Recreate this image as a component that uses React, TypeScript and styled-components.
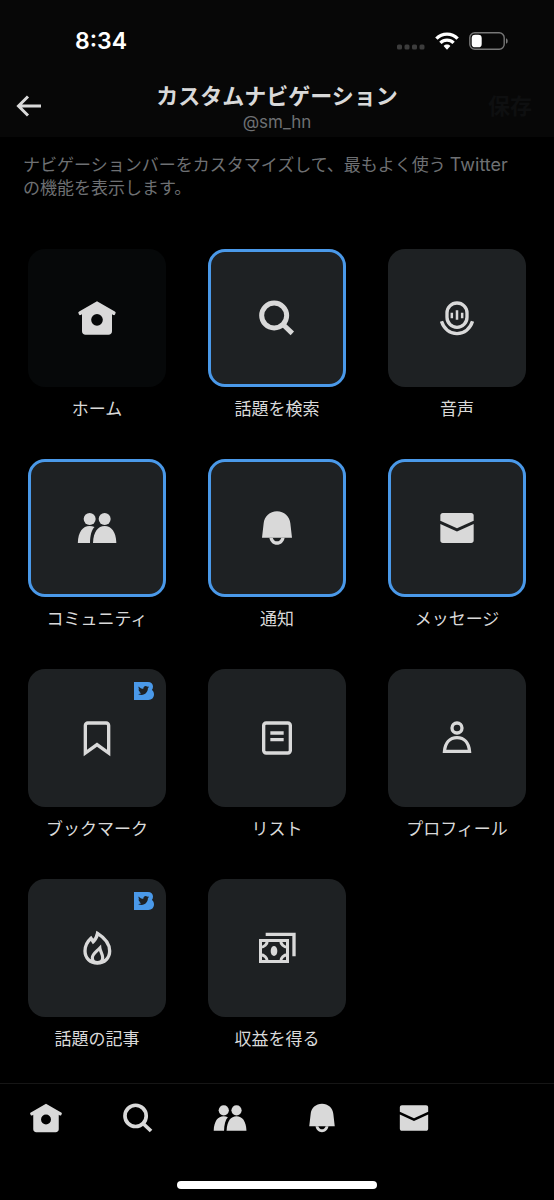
import React from "react";
import styled, { createGlobalStyle } from "styled-components";
import { FaTwitter } from "react-icons/fa6";

const GlobalStyle = createGlobalStyle`
  *, *::before, *::after { box-sizing: border-box; }
  body {
    margin: 0;
    background: #000;
    color: #d9d9d9;
    font-family: Inter, "Noto Sans CJK JP", sans-serif;
  }
  button { font: inherit; color: inherit; background: none; border: 0; padding: 0; cursor: pointer; }
  svg { display: block; }
`;

const Page = styled.div`
  min-height: 100vh;
  display: flex;
  flex-direction: column;
`;

const Header = styled.header`
  background: #070707;
`;

const StatusBar = styled.div`
  height: 82px;
  padding: 0 46px 0 75px;
  display: flex;
  align-items: center;
  justify-content: space-between;
  color: #fff;
`;

const Clock = styled.time`
  font-size: 23px;
  line-height: 28px;
  font-weight: 600;
`;

const StatusIcons = styled.div`
  display: flex;
  align-items: center;
  gap: 10px;
`;

const TitleBar = styled.div`
  display: grid;
  grid-template-columns: 1fr auto 1fr;
  align-items: start;
  padding: 0 16px 3px;
`;

const BackButton = styled.button`
  justify-self: start;
  height: 48px;
`;

const SaveButton = styled.button`
  justify-self: end;
  height: 48px;
  padding: 0 6px;
  font-size: 22px;
  line-height: 28px;
  font-weight: 700;

  &:disabled {
    color: #0e0f10;
    cursor: default;
  }
`;

const Heading = styled.div`
  text-align: center;
`;

const Title = styled.h1`
  margin: 0;
  font-size: 22px;
  line-height: 28px;
  font-weight: 700;
`;

const Handle = styled.p`
  margin: 0;
  font-size: 17px;
  line-height: 24px;
  color: #6e7073;
`;

const Main = styled.main`
  flex: 1;
`;

const Description = styled.p`
  margin: 0;
  padding: 16px 40px 49px 23px;
  font-size: 17px;
  line-height: 23px;
  color: #6e7073;
`;

const BrandName = styled.span`
  margin-left: 4px;
  font-size: 18px;
`;

const TileGrid = styled.div`
  display: grid;
  grid-template-columns: repeat(3, 1fr);
  gap: 38px 42px;
  padding: 0 28px 24px;
`;

const TileButton = styled.button`
  display: flex;
  flex-direction: column;
  gap: 10px;
  text-align: center;
`;

const TileFace = styled.span<{ $selected?: boolean; $locked?: boolean }>`
  position: relative;
  width: 100%;
  aspect-ratio: 1;
  display: flex;
  align-items: center;
  justify-content: center;
  border-radius: 17px;
  border: 3px solid ${(p) => (p.$selected ? "#4a99e9" : "transparent")};
  background: ${(p) => (p.$locked ? "#060809" : "#1e2123")} border-box;
`;

const TileLabel = styled.span`
  width: 100%;
  font-size: 17px;
  line-height: 24px;
`;

const BadgeSlot = styled.span`
  position: absolute;
  top: 10px;
  right: 9px;
`;

const TabBar = styled.nav`
  border-top: 1px solid #161616;
  padding: 17px 0 11px;
`;

const Tabs = styled.div`
  display: grid;
  grid-template-columns: repeat(6, 1fr);
  padding-right: 2px;
`;

const Tab = styled.button`
  display: flex;
  justify-content: center;
`;

const HomeIndicator = styled.div`
  width: 36%;
  height: 8px;
  margin: 46px auto 0;
  border-radius: 4px;
  background: #fff;
`;

type IconProps = { size: number };

const Glyph = ({ size, children }: IconProps & { children: React.ReactNode }) => (
  <svg width={size} height={size} viewBox="0 0 24 24" fill="currentColor" aria-hidden="true">
    {children}
  </svg>
);

const HomeIcon = ({ size }: IconProps) => (
  <Glyph size={size}>
    <path
      fillRule="evenodd"
      d="M12 1.9 22.7 8.1c.5.3.6.7.4 1.1l-.3.7c-.2.4-.6.5-1 .3l-.8-.5V20c0 1.200-.9 2.100-2.100 2.100H5.100C3.900 22.100 3 21.200 3 20V9.700l-.8.500c-.4.200-.8.100-1-.3l-.3-.7c-.2-.4-.1-.8.4-1.100zM12 9.600a3.500 3.500 0 1 0 0 7 3.500 3.500 0 0 0 0-7z"
    />
  </Glyph>
);

const SearchIcon = ({ size, weight = 2.6 }: IconProps & { weight?: number }) => (
  <Glyph size={size}>
    <g fill="none" stroke="currentColor" strokeWidth={weight}>
      <circle cx="10.300" cy="10.500" r="7.500" />
      <path d="M15.600 15.900 21.200 21.200" />
    </g>
  </Glyph>
);

const VoiceIcon = ({ size }: IconProps) => (
  <Glyph size={size}>
    <g fill="none" stroke="currentColor" strokeWidth="2">
      <rect x="6" y="3" width="12" height="14.600" rx="6" />
      <path d="M2.700 14C4 18.400 7.600 21.400 12 21.400s8-3 9.300-7.400" />
      <path strokeWidth="1.500" d="M8.900 8.800v3.400M12 7.400V13M15.100 8.800v3.400" />
    </g>
  </Glyph>
);

const CommunityIcon = ({ size }: IconProps) => (
  <Glyph size={size}>
    <circle cx="7.600" cy="6.600" r="3.600" />
    <circle cx="16.600" cy="6.600" r="3.600" />
    <path d="M9.600 21c.2-6.800 3-10.200 7-10.200s6.800 3.400 7 10.200z" />
    <path d="M.5 21c.2-6.800 3-10.200 7-10.200 1.100 0 2.100.2 3 .6C8.700 13.300 7.900 16.500 7.800 21z" />
  </Glyph>
);

const BellIcon = ({ size }: IconProps) => (
  <Glyph size={size}>
    <path d="M12 2C7.700 2 4.400 5 4 9.200L3 17.900h18L20 9.200C19.600 5 16.300 2 12 2z" />
    <path d="M7.400 17.800C7.900 20.400 9.700 22 12 22s4.100-1.600 4.600-4.200h-2c-.5 1.400-1.400 2.200-2.600 2.200s-2.100-.8-2.600-2.200z" />
  </Glyph>
);

const MailIcon = ({ size }: IconProps) => (
  <Glyph size={size}>
    <path d="M2 7.600V4.500C2 3.600 2.600 3 3.500 3h17c.9 0 1.500.6 1.500 1.500v3.100l-10 4.500z" />
    <path d="M2 9.600 12 14.100 22 9.600v9.900c0 .9-.6 1.500-1.500 1.500h-17c-.9 0-1.500-.6-1.500-1.500z" />
  </Glyph>
);

const BookmarkIcon = ({ size }: IconProps) => (
  <Glyph size={size}>
    <path d="M4 4.500C4 3.120 5.120 2 6.500 2h11C18.880 2 20 3.120 20 4.500v18.440l-8-5.710-8 5.710V4.500zM6.500 4c-.28 0-.5.220-.5.500v14.560l6-4.290 6 4.290V4.500c0-.28-.22-.5-.5-.5h-11z" />
  </Glyph>
);

const ListIcon = ({ size }: IconProps) => (
  <Glyph size={size}>
    <g fill="none" stroke="currentColor" strokeWidth="2">
      <rect x="4" y="3" width="16" height="18" rx="1.500" />
      <path d="M8 9h8M8 13h8" />
    </g>
  </Glyph>
);

const ProfileIcon = ({ size }: IconProps) => (
  <Glyph size={size}>
    <g fill="none" stroke="currentColor" strokeWidth="2">
      <circle cx="12" cy="6" r="3" />
      <path d="M4.500 20c.4-5 3.100-8.200 7.500-8.200s7.100 3.200 7.500 8.200z" />
    </g>
  </Glyph>
);

const FlameIcon = ({ size }: IconProps) => (
  <Glyph size={size}>
    <g fill="none" stroke="currentColor" strokeWidth="2">
      <path d="M12.300 3.200c4.500 2.800 7.300 6.500 7.300 10.600 0 4.300-3.200 7.200-7.400 7.200s-7.400-2.900-7.400-7.200c0-3 1.300-5.500 3.600-7.600l1.300 2c1.300-1.200 2.200-2.900 2.600-5z" />
      <path strokeWidth="1.900" d="M12.200 20.800c-1.900 0-3-1.200-3-2.900 0-2.400 2.200-3.500 4.500-5.900.2 2 1.700 3.400 1.700 5.900 0 1.700-1.300 2.900-3.200 2.900z" />
    </g>
  </Glyph>
);

const MoneyIcon = ({ size }: IconProps) => (
  <Glyph size={size}>
    <g fill="none" stroke="currentColor" strokeWidth="1.800">
      <path strokeWidth="2" d="M5.200 3.800h17V17" />
      <rect x="2.100" y="7.500" width="16.200" height="12.600" />
      <path d="M6.200 7.500c0 2.200-1.900 4-4.100 4M14.200 7.500c0 2.200 1.900 4 4.100 4M6.200 20.100c0-2.200-1.900-4-4.100-4M14.200 20.100c0-2.200 1.900-4 4.100-4" />
    </g>
    <ellipse cx="10.200" cy="13.800" rx="2" ry="3" />
  </Glyph>
);

const BlueBadge = () => (
  <svg width="20" height="18" viewBox="0 0 20 18" aria-hidden="true">
    <path
      fill="#4a99e9"
      d="M0 0h14c3 0 5 1.900 5 4.600 0 1.400-.4 2.600-1.100 3.500 1.300.9 2.100 2.400 2.100 4.200 0 3.400-2.300 5.700-5.600 5.700H0z"
    />
    <FaTwitter x="4" y="3" size={11} color="#1e2123" />
  </svg>
);

const BackArrow = () => (
  <svg width="26" height="22" viewBox="0 0 26 22" fill="none" stroke="currentColor" strokeWidth="3" aria-hidden="true">
    <path d="M12 1.500 2.500 11l9.500 9.500M2.500 11H25" />
  </svg>
);

const SignalDots = () => (
  <svg width="28" height="18" viewBox="0 0 28 18" fill="#3c3c3c" aria-hidden="true">
    {[0, 1, 2, 3].map((i) => (
      <rect key={i} x={i * 7.500} y="12.500" width="5" height="5" rx="1.500" />
    ))}
  </svg>
);

const WifiIcon = () => (
  <svg width="24" height="18" viewBox="0 0 24 18" fill="none" stroke="currentColor" aria-hidden="true">
    <path strokeWidth="3.400" d="M1.400 6.600C7.300.6 16.700.6 22.600 6.600" />
    <path strokeWidth="3.300" d="M5.400 10.900c3.700-3.700 9.500-3.700 13.200 0" />
    <path fill="currentColor" stroke="none" d="M8.600 13.900c1.900-1.800 4.900-1.800 6.800 0L12 17.700z" />
  </svg>
);

const BatteryIcon = () => (
  <svg width="39" height="18" viewBox="0 0 39 18" aria-hidden="true">
    <rect x=".8" y=".8" width="34.400" height="16.400" rx="5" fill="none" stroke="#777" strokeWidth="1.400" />
    <rect x="2.700" y="2.700" width="10" height="12.600" rx="3.400" fill="#fff" />
    <path d="M37 6.200c1.200.5 1.700 1.500 1.700 2.800s-.5 2.300-1.700 2.800z" fill="#777" />
  </svg>
);

type Item = {
  label: string;
  icon: React.ReactNode;
  selected?: boolean;
  locked?: boolean;
  badge?: boolean;
};

const TILE_ICON = 40;
const TAB_ICON = 34;

const items: Item[] = [
  { label: "ホーム", icon: <HomeIcon size={TILE_ICON} />, locked: true },
  { label: "話題を検索", icon: <SearchIcon size={TILE_ICON} weight={3} />, selected: true },
  { label: "音声", icon: <VoiceIcon size={TILE_ICON} /> },
  { label: "コミュニティ", icon: <CommunityIcon size={TILE_ICON} />, selected: true },
  { label: "通知", icon: <BellIcon size={TILE_ICON} />, selected: true },
  { label: "メッセージ", icon: <MailIcon size={TILE_ICON} />, selected: true },
  { label: "ブックマーク", icon: <BookmarkIcon size={TILE_ICON} />, badge: true },
  { label: "リスト", icon: <ListIcon size={TILE_ICON} /> },
  { label: "プロフィール", icon: <ProfileIcon size={TILE_ICON} /> },
  { label: "話題の記事", icon: <FlameIcon size={TILE_ICON} />, badge: true },
  { label: "収益を得る", icon: <MoneyIcon size={TILE_ICON} /> },
];

const tabs = [
  { label: "ホーム", icon: <HomeIcon size={TAB_ICON} /> },
  { label: "話題を検索", icon: <SearchIcon size={TAB_ICON} /> },
  { label: "コミュニティ", icon: <CommunityIcon size={TAB_ICON} /> },
  { label: "通知", icon: <BellIcon size={TAB_ICON} /> },
  { label: "メッセージ", icon: <MailIcon size={TAB_ICON} /> },
];

export default function App() {
  return (
    <Page lang="ja">
      <GlobalStyle />
      <Header>
        <StatusBar>
          <Clock>8:34</Clock>
          <StatusIcons>
            <SignalDots />
            <WifiIcon />
            <BatteryIcon />
          </StatusIcons>
        </StatusBar>
        <TitleBar>
          <BackButton type="button" aria-label="戻る">
            <BackArrow />
          </BackButton>
          <Heading>
            <Title>カスタムナビゲーション</Title>
            <Handle>@sm_hn</Handle>
          </Heading>
          <SaveButton type="button" disabled>
            保存
          </SaveButton>
        </TitleBar>
      </Header>
      <Main>
        <Description>
          ナビゲーションバーをカスタマイズして、最もよく使う<BrandName>Twitter</BrandName>の機能を表示します。
        </Description>
        <TileGrid>
          {items.map((item) => (
            <TileButton key={item.label} type="button" aria-pressed={!!item.selected} disabled={item.locked}>
              <TileFace $selected={item.selected} $locked={item.locked}>
                {item.icon}
                {item.badge && (
                  <BadgeSlot>
                    <BlueBadge />
                  </BadgeSlot>
                )}
              </TileFace>
              <TileLabel>{item.label}</TileLabel>
            </TileButton>
          ))}
        </TileGrid>
      </Main>
      <TabBar>
        <Tabs>
          {tabs.map((tab) => (
            <Tab key={tab.label} type="button" aria-label={tab.label}>
              {tab.icon}
            </Tab>
          ))}
        </Tabs>
        <HomeIndicator />
      </TabBar>
    </Page>
  );
}
